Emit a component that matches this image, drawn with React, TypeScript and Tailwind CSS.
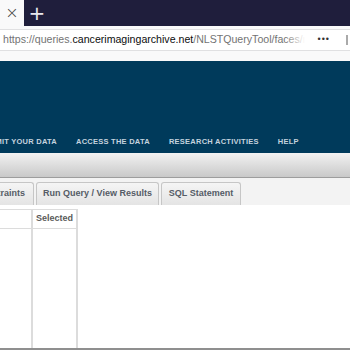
export default function App() {
  return (
    <div className="w-[350px] h-[350px] overflow-hidden bg-white flex flex-col font-['Liberation_Sans',Arial,sans-serif]">
      {/* browser tab strip */}
      <div className="h-[26px] flex bg-[#1f1e3c] shrink-0">
        <div className="w-[24px] bg-[#f9f9fa] flex items-center justify-center text-[#444] text-[16px] leading-none font-['DejaVu_Sans',sans-serif] font-light">
          ×
        </div>
        <div className="w-[26px] flex items-center justify-center text-[#e8e8ee] text-[20px] leading-none font-['DejaVu_Sans',sans-serif]">
          +
        </div>
      </div>
      {/* toolbar with address field */}
      <div className="h-[35px] shrink-0 bg-[#f9f9fa] pt-[3px] flex flex-col">
        <div className="h-[22px] bg-white border-y border-[#e0e0e2] flex items-center">
          <div className="w-[305px] pl-[3px] overflow-hidden whitespace-nowrap text-[10.6px] relative">
            <span className="text-[#737373]">https://queries.</span>
            <span className="text-[#0c0c0d]">cancerimagingarchive.net</span>
            <span className="text-[#737373]">/NLSTQueryTool/faces/main.xhtml</span>
            <div className="absolute right-0 top-0 h-full w-[20px] bg-gradient-to-r from-transparent to-white" />
          </div>
          <div className="ml-auto mr-[16px] text-[#333] text-[9px] tracking-[1px]">•••</div>
          <div className="mr-[2px] h-[10px] w-[2px] bg-[#aaa]" />
        </div>
      </div>
      {/* site banner */}
      <div className="h-[92px] shrink-0 bg-[#003a5b] flex items-end pb-[6px]">
        <div className="flex gap-[19px] text-[7.5px] font-bold tracking-[0.25px] text-[#c5d3df] whitespace-nowrap leading-[10px]">
          <div className="w-[57px] flex justify-end">
            <span>SUBMIT YOUR DATA</span>
          </div>
          <span>ACCESS THE DATA</span>
          <span>RESEARCH ACTIVITIES</span>
          <span>HELP</span>
        </div>
      </div>
      {/* gray menu bar */}
      <div className="h-[25px] shrink-0 bg-gradient-to-b from-[#f2f2f2] to-[#c9c9c9] border-b border-[#9d9d9d]" />
      {/* query tabs */}
      <div className="h-[27px] shrink-0 bg-[#f3f3f3] flex items-end gap-[2px] text-[9px] font-bold text-[#555c66]">
        <div className="h-[23px] w-[34px] border border-l-0 border-b-0 border-[#c6c6c6] rounded-tr-[3px] bg-gradient-to-b from-[#f5f5f5] to-[#e4e4e4] flex items-center justify-end pr-[8px]">
          traints
        </div>
        <div className="h-[23px] w-[123px] border border-b-0 border-[#c6c6c6] rounded-t-[3px] bg-gradient-to-b from-[#f5f5f5] to-[#e4e4e4] flex items-center justify-center">
          Run Query / View Results
        </div>
        <div className="h-[23px] w-[80px] border border-b-0 border-[#c6c6c6] rounded-t-[3px] bg-gradient-to-b from-[#f5f5f5] to-[#e4e4e4] flex items-center justify-center">
          SQL Statement
        </div>
      </div>
      {/* table */}
      <div className="flex-1 pt-[4px] flex flex-col">
        <div className="w-[78px] flex-1 flex flex-col border-t border-[#dcdcdc]">
          <div className="h-[19px] flex border-b border-[#dcdcdc] text-[9px] font-bold text-[#5a5a5a]">
            <div className="w-[33px] border-r-2 border-[#dcdcdc]" />
            <div className="w-[45px] border-r-2 border-[#dcdcdc] flex items-center justify-center">Selected</div>
          </div>
          <div className="flex-1 flex">
            <div className="w-[33px] border-r-2 border-[#dcdcdc]" />
            <div className="w-[45px] border-r-2 border-[#dcdcdc]" />
          </div>
        </div>
        <div className="h-[2px] bg-[#8f8f8f]" />
      </div>
    </div>
  );
}
